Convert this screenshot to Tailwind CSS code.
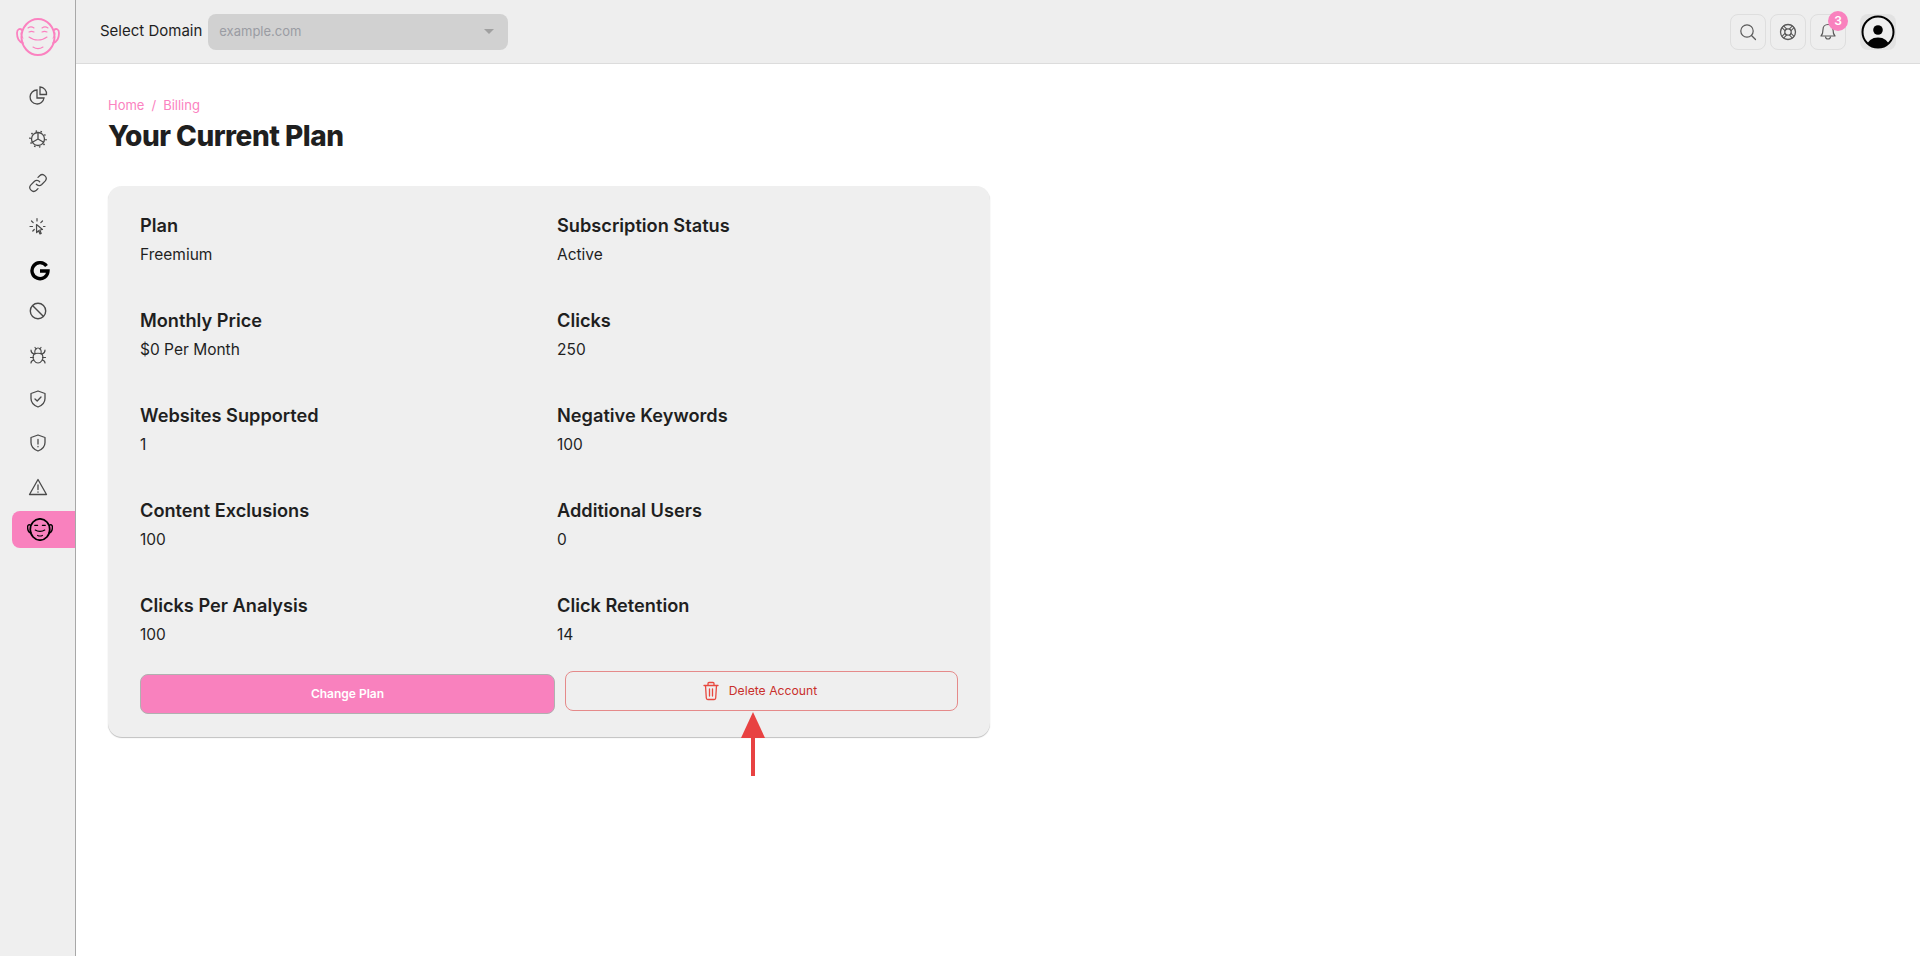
<!DOCTYPE html>
<html lang="en">
<head>
  <meta charset="UTF-8">
  <meta name="viewport" content="width=device-width, initial-scale=1.0">
  <title>Billing</title>
  <script src="https://cdn.jsdelivr.net/npm/@tailwindcss/browser@4"></script>
</head>
<body class="bg-white text-[#1f1f1f] font-['Inter',sans-serif] h-[956px] overflow-hidden">
  <div class="flex h-[956px]">
    <!-- Sidebar -->
    <aside class="w-[76px] shrink-0 bg-[#efefef] border-r border-[#a8a8a8] flex flex-col">
      <div class="h-[73px] pl-[16px] pt-[18px]">
        <svg width="44" height="38" viewBox="0 0 44 38" fill="none" stroke="#fb82c0" stroke-width="1.6" stroke-linecap="round">
          <ellipse cx="22" cy="19" rx="16.500" ry="18" stroke-width="2"/>
          <path d="M6 12c-2-2-5-1-5 3 0 5 2 9 6 10M38 12c2-2 5-1 5 3 0 5-2 9-6 10" stroke-width="1.800"/>
          <path d="M5 15c0 2 1 4 2 5M39 15c0 2-1 4-2 5" stroke-width="1"/>
          <path d="M12 10c2-1.500 4-1.500 6 0M26 10c2-1.500 4-1.500 6 0M13 14c2-1 3-1 5 0M26 14c2-1 3-1 5 0M13 19c5 4 13 4 18 0M17 29c3 2 7 2 10 0" stroke-width="1.100"/>
        </svg>
      </div>
      <nav class="flex flex-col">
        <a class="h-[44px] pl-[28px] flex items-center">
          <svg width="20" height="20" viewBox="0 0 20 20" fill="none" stroke="#4a4a4a" stroke-width="1.300"><path d="M9 5a7 7 0 1 0 7 8H9z"/><path d="M12 2v7.500h6.500A6.800 6.800 0 0 0 12 2z"/></svg>
        </a>
        <a class="h-[44px] pl-[28px] flex items-center">
          <svg width="20" height="20" viewBox="0 0 20 20" fill="none" stroke="#4a4a4a" stroke-width="1.300"><circle cx="10" cy="10" r="6.500"/><path d="M10 10V3.500M10 10l5.600 3.200M10 10l-5.600 3.200"/><circle cx="10" cy="10" r="8" stroke-width="1.500" stroke-dasharray="1.500 3.500"/></svg>
        </a>
        <a class="h-[44px] pl-[28px] flex items-center">
          <svg width="20" height="20" viewBox="0 0 24 24" fill="none" stroke="#4a4a4a" stroke-width="1.500" stroke-linecap="round" stroke-linejoin="round"><path d="M10 13.500a4.500 4.500 0 0 0 6.500.3l4-4a4.600 4.600 0 0 0-6.500-6.500l-2 2"/><path d="M14 10.500a4.500 4.500 0 0 0-6.500-.3l-4 4a4.600 4.600 0 0 0 6.500 6.500l2-2"/></svg>
        </a>
        <a class="h-[44px] pl-[28px] flex items-center">
          <svg width="20" height="20" viewBox="0 0 20 20" fill="none" stroke="#4a4a4a" stroke-width="1.200" stroke-linecap="round"><path d="M9 1.500v2.500M3.500 4l1.700 1.700M14.500 4l-1.700 1.700M2 9.500h2.500M4.800 14l1.500-1.500M15.500 9.500H17"/><path d="M8.500 7.500l6 5-2.700.5 1.400 3.500-1.200.5-1.400-3.300-2 1.800z" stroke-linejoin="round"/></svg>
        </a>
        <a class="h-[40px] pt-[4px] pl-[30px] flex items-center">
          <svg width="20" height="20" viewBox="0 0 20 20" fill="none" stroke="#000" stroke-width="3.400"><path d="M16.500 5A8 8 0 1 0 18 10H10"/></svg>
        </a>
        <a class="h-[44px] pl-[28px] flex items-center">
          <svg width="20" height="20" viewBox="0 0 20 20" fill="none" stroke="#4a4a4a" stroke-width="1.400"><circle cx="10" cy="10" r="7.700"/><path d="M4.500 4.500l11 11"/></svg>
        </a>
        <a class="h-[44px] pl-[28px] flex items-center">
          <svg width="20" height="20" viewBox="0 0 20 20" fill="none" stroke="#4a4a4a" stroke-width="1.200" stroke-linecap="round"><path d="M6 9c1-1 7-1 8 0 1 2 1 5 0 6.500-1 1.500-3 2.500-4 2.500s-3-1-4-2.500C5 14 5 11 6 9z"/><path d="M7 9c-1-4 1-6 3-6s4 2 3 6M7 2.500L8.200 4M13 2.500L11.800 4M3 5c0 2 1 3.500 3 4M17 5c0 2-1 3.500-3 4M2.500 12.500h3M17.500 12.500h-3M3 18c0-1.500 1-2.500 2.800-3M17 18c0-1.500-1-2.500-2.800-3"/></svg>
        </a>
        <a class="h-[44px] pl-[28px] flex items-center">
          <svg width="20" height="20" viewBox="0 0 20 20" fill="none" stroke="#4a4a4a" stroke-width="1.300" stroke-linejoin="round" stroke-linecap="round"><path d="M10 2l7 2.500v5c0 4.500-3 7-7 8.500-4-1.500-7-4-7-8.500v-5z"/><path d="M7 10l2.200 2L13 8"/></svg>
        </a>
        <a class="h-[44px] pl-[28px] flex items-center">
          <svg width="20" height="20" viewBox="0 0 20 20" fill="none" stroke="#4a4a4a" stroke-width="1.300" stroke-linejoin="round" stroke-linecap="round"><path d="M10 2l7 2.500v5c0 4.500-3 7-7 8.500-4-1.500-7-4-7-8.500v-5z"/><path d="M10 6.500v4.500M10 13.500v.3"/></svg>
        </a>
        <a class="h-[44px] pl-[28px] flex items-center">
          <svg width="20" height="20" viewBox="0 0 20 20" fill="none" stroke="#4a4a4a" stroke-width="1.300" stroke-linejoin="round" stroke-linecap="round"><path d="M10 2.500l8.500 15h-17z"/><path d="M10 8v4.500M10 15v.2"/></svg>
        </a>
        <a class="ml-[12px] mt-[2px] h-[37px] w-[63px] bg-[#f981be] rounded-l-[8px] pl-[15px] flex items-center">
          <svg width="26" height="23" viewBox="0 0 44 38" fill="none" stroke="#000" stroke-width="2.400" stroke-linecap="round">
            <ellipse cx="22" cy="19" rx="16.500" ry="18" stroke-width="3"/>
            <path d="M6 12c-2-2-5-1-5 3 0 5 2 9 6 10M38 12c2-2 5-1 5 3 0 5-2 9-6 10"/>
            <path d="M13 12h5M26 12h5M14 20c4 3 12 3 16 0M18 29c3 1.500 5 1.500 8 0" stroke-width="2"/>
          </svg>
        </a>
      </nav>
    </aside>

    <div class="flex-1 flex flex-col min-w-0">
      <!-- Top bar -->
      <header class="h-[64px] shrink-0 bg-[#eeeeee] border-b border-[#dcdcdc] flex items-center justify-between pl-[24px] pr-[24px]">
        <div class="flex items-center gap-[6px]">
          <span class="text-[15px] text-[#1f1f1f] whitespace-nowrap">Select Domain</span>
          <div class="w-[300px] h-[36px] bg-[#d1d1d1] rounded-[8px] flex items-center justify-between pl-[11px] pr-[14px]">
            <span class="text-[13px] text-[#9a9ca3]">example.com</span>
            <span class="w-0 h-0 border-x-[5px] border-x-transparent border-t-[5px] border-t-[#a0a0a0]"></span>
          </div>
        </div>
        <div class="flex items-center">
          <button class="w-[36px] h-[36px] rounded-[8px] border border-[#dedede] flex items-center justify-center">
            <svg width="18" height="18" viewBox="0 0 18 18" fill="none" stroke="#5a5a5a" stroke-width="1.200" stroke-linecap="round"><circle cx="8" cy="8" r="6.200"/><path d="M12.500 12.500L16.500 16.500"/></svg>
          </button>
          <button class="ml-[4px] w-[36px] h-[36px] rounded-[8px] border border-[#dedede] flex items-center justify-center">
            <svg width="18" height="18" viewBox="0 0 18 18" fill="none"><path d="M3.500 3.500l3.500 3.500M14.500 3.500L11 7M3.500 14.500L7 11M14.500 14.500L11 11" stroke="#5a5a5a" stroke-width="3.400"/><path d="M3.500 3.500l3.500 3.500M14.500 3.500L11 7M3.500 14.500L7 11M14.500 14.500L11 11" stroke="#eeeeee" stroke-width="1.200"/><circle cx="9" cy="9" r="7.500" stroke="#5a5a5a" stroke-width="1.300"/><circle cx="9" cy="9" r="3.200" stroke="#5a5a5a" stroke-width="1.300"/></svg>
          </button>
          <button class="relative ml-[4px] w-[36px] h-[36px] rounded-[8px] border border-[#dedede] flex items-center justify-center">
            <svg width="18" height="20" viewBox="0 0 18 20" fill="none" stroke="#5a5a5a" stroke-width="1.200" stroke-linejoin="round"><path d="M9 2.500c-3 0-5 2.200-5 5 0 3.500-.5 5-2 6.500h14c-1.500-1.500-2-3-2-6.500 0-2.800-2-5-5-5z"/><path d="M6.500 14.500a2.500 2.500 0 0 0 5 0"/></svg>
            <span class="absolute -top-[4px] left-[17px] w-[20px] h-[20px] rounded-full bg-[#f981be] text-white text-[12px] font-semibold flex items-center justify-center">3</span>
          </button>
          <div class="ml-[14px] w-[36px] h-[36px] rounded-[8px] bg-[#e2e2e2] flex items-center justify-center">
            <svg width="34" height="34" viewBox="0 0 34 34"><defs><clipPath id="avatar"><circle cx="17" cy="17" r="15.500"/></clipPath></defs><circle cx="17" cy="17" r="15.500" fill="#eeeeee" stroke="#000" stroke-width="2"/><circle cx="17" cy="15" r="4.800"/><ellipse cx="17" cy="31" rx="11" ry="8.500" clip-path="url(#avatar)"/></svg>
          </div>
        </div>
      </header>

      <!-- Main -->
      <main class="flex-1 pl-[32px] relative">
        <div class="mt-[33px] text-[13px] leading-[16px] text-[#fb82c0] flex gap-[7px]">
          <span>Home</span><span>/</span><span>Billing</span>
        </div>
        <h1 class="mt-[5px] text-[28px] leading-[36px] font-extrabold tracking-[-0.5px] text-[#1f1f1f]">Your Current Plan</h1>

        <section class="mt-[32px] w-[882px] h-[551px] bg-[#efefef] rounded-[14px] shadow-[0_1px_1px_rgba(0,0,0,0.25)] pt-[25px] pl-[32px] pr-[32px]">
          <div class="grid grid-cols-[417px_1fr] auto-rows-[95px]">
            <div><h3 class="text-[18.200px] leading-[28px] font-semibold">Plan</h3><p class="mt-[4px] text-[15.500px] leading-[24px]">Freemium</p></div>
            <div><h3 class="text-[18.200px] leading-[28px] font-semibold">Subscription Status</h3><p class="mt-[4px] text-[15.500px] leading-[24px]">Active</p></div>
            <div><h3 class="text-[18.200px] leading-[28px] font-semibold">Monthly Price</h3><p class="mt-[4px] text-[15.500px] leading-[24px]">$0 Per Month</p></div>
            <div><h3 class="text-[18.200px] leading-[28px] font-semibold">Clicks</h3><p class="mt-[4px] text-[15.500px] leading-[24px]">250</p></div>
            <div><h3 class="text-[18.200px] leading-[28px] font-semibold">Websites Supported</h3><p class="mt-[4px] text-[15.500px] leading-[24px]">1</p></div>
            <div><h3 class="text-[18.200px] leading-[28px] font-semibold">Negative Keywords</h3><p class="mt-[4px] text-[15.500px] leading-[24px]">100</p></div>
            <div><h3 class="text-[18.200px] leading-[28px] font-semibold">Content Exclusions</h3><p class="mt-[4px] text-[15.500px] leading-[24px]">100</p></div>
            <div><h3 class="text-[18.200px] leading-[28px] font-semibold">Additional Users</h3><p class="mt-[4px] text-[15.500px] leading-[24px]">0</p></div>
            <div><h3 class="text-[18.200px] leading-[28px] font-semibold">Clicks Per Analysis</h3><p class="mt-[4px] text-[15.500px] leading-[24px]">100</p></div>
            <div><h3 class="text-[18.200px] leading-[28px] font-semibold">Click Retention</h3><p class="mt-[4px] text-[15.500px] leading-[24px]">14</p></div>
          </div>
          <div class="-mt-[15px] flex items-start gap-[10px]">
            <button class="mt-[3px] w-[415px] h-[40px] bg-[#f981be] border border-[#b0b0b0] rounded-[8px] text-white text-[12px] font-semibold">Change Plan</button>
            <button class="w-[393px] h-[40px] border border-[#e58a8a] rounded-[8px] flex items-center justify-center gap-[9px] text-[#c9302c] text-[12.200px] pr-[4px]">
              <svg width="18" height="20" viewBox="0 0 18 20" fill="none" stroke="#e8483f" stroke-width="1.300" stroke-linejoin="round" stroke-linecap="round"><path d="M2 4.500h14M6 4.500V2.500c0-.6.500-1 1-1h4c.5 0 1 .4 1 1v2M3.500 4.500l.8 12.500c0 .8.700 1.500 1.500 1.500h6.400c.8 0 1.500-.7 1.500-1.500l.8-12.500M7.500 8v7M10.500 8v7"/></svg>
              Delete Account
            </button>
          </div>
        </section>

        <!-- Annotation arrow -->
        <svg class="absolute left-[664px] top-[647px]" width="26" height="66" viewBox="0 0 26 66"><path d="M11 25h4v40h-4z" fill="#e84242"/><path d="M13 1L25 27H1z" fill="#e84242"/></svg>
      </main>
    </div>
  </div>
</body>
</html>
